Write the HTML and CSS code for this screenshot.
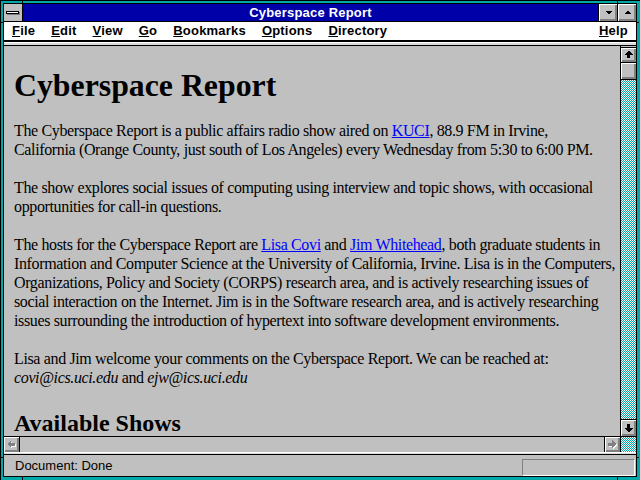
FILE: index.html
```html
<!DOCTYPE html>
<html>
<head>
<meta charset="utf-8">
<title>Cyberspace Report</title>
<link rel="stylesheet" href="styles.css">
</head>
<body>
<div class="window">
  <div class="frame">
    <div class="titlebar">
      <div class="sysmenu"><span class="sysbar"></span></div>
      <div class="title">Cyberspace Report</div>
      <div class="tbtn"><svg width="17" height="17" viewBox="0 0 17 17" shape-rendering="crispEdges"><polygon points="5,7 12,7 8.5,10.5" fill="#000"/></svg></div>
      <div class="tbtn"><svg width="17" height="17" viewBox="0 0 17 17" shape-rendering="crispEdges"><polygon points="5,10 12,10 8.5,6.5" fill="#000"/></svg></div>
    </div>
    <div class="menubar">
      <span class="mi"><u>F</u>ile</span>
      <span class="mi"><u>E</u>dit</span>
      <span class="mi"><u>V</u>iew</span>
      <span class="mi"><u>G</u>o</span>
      <span class="mi"><u>B</u>ookmarks</span>
      <span class="mi"><u>O</u>ptions</span>
      <span class="mi"><u>D</u>irectory</span>
      <span class="mi help"><u>H</u>elp</span>
    </div>
    <div class="sep"></div>
    <div class="main">
      <div class="viewport">
        <div class="page">
          <h1>Cyberspace Report</h1>
          <p>The Cyberspace Report is a public affairs radio show aired on <a href="#">KUCI</a>, 88.9 FM in Irvine,<br>California (Orange County, just south of Los Angeles) every Wednesday from 5:30 to 6:00 PM.</p>
          <p>The show explores social issues of computing using interview and topic shows, with occasional<br>opportunities for call-in questions.</p>
          <p>The hosts for the Cyberspace Report are <a href="#">Lisa Covi</a> and <a href="#">Jim Whitehead</a>, both graduate students in<br>Information and Computer Science at the University of California, Irvine. Lisa is in the Computers,<br>Organizations, Policy and Society (CORPS) research area, and is actively researching issues of<br>social interaction on the Internet. Jim is in the Software research area, and is actively researching<br>issues surrounding the introduction of hypertext into software development environments.</p>
          <p>Lisa and Jim welcome your comments on the Cyberspace Report. We can be reached at:<br><i>covi@ics.uci.edu</i> and <i>ejw@ics.uci.edu</i></p>
          <h2>Available Shows</h2>
        </div>
      </div>
      <div class="vscroll">
        <div class="sbtn up"><svg width="15" height="14" viewBox="0 0 15 14" shape-rendering="crispEdges"><polygon points="7,3 8,3 12,7 9,7 9,10 6,10 6,7 3,7" fill="#000"/></svg></div>
        <div class="thumb"></div>
        <div class="track"><svg class="dither" width="15" height="400" shape-rendering="crispEdges"><defs><pattern id="dv" width="2" height="2" patternUnits="userSpaceOnUse"><rect width="2" height="2" fill="#00a8a8"/><rect x="1" y="0" width="1" height="1" fill="#ffffff"/><rect x="0" y="1" width="1" height="1" fill="#ffffff"/></pattern></defs><rect width="15" height="400" fill="url(#dv)"/></svg></div>
        <div class="sbtn down"><svg width="15" height="16" viewBox="0 0 15 16" shape-rendering="crispEdges"><polygon points="6,4 9,4 9,8 12,8 8,12 7,12 3,8 6,8" fill="#000"/></svg></div>
      </div>
    </div>
    <div class="hrow">
      <div class="hbtn left"><svg width="15" height="15" viewBox="0 0 15 15" shape-rendering="crispEdges"><polygon points="4,8 8,4 8,7 12,7 12,10 8,10 8,12" fill="#fff"/><polygon points="3,7 7,3 7,6 11,6 11,9 7,9 7,11" fill="#808080"/></svg></div>
      <div class="htrack"></div>
      <div class="hbtn right"><svg width="15" height="15" viewBox="0 0 15 15" shape-rendering="crispEdges"><polygon points="12,8 8,4 8,7 4,7 4,10 8,10 8,12" fill="#fff"/><polygon points="11,7 7,3 7,6 3,6 3,9 7,9 7,11" fill="#808080"/></svg></div>
      <div class="corner"><svg class="dither" width="15" height="15" shape-rendering="crispEdges"><rect width="15" height="15" fill="url(#dv)"/></svg></div>
    </div>
    <div class="sep2"></div>
    <div class="status">
      <span class="stext">Document: Done</span>
      <div class="sbox"></div>
    </div>
  </div>
  <span class="notch v t1"></span>
  <span class="notch v t2"></span>
  <span class="notch v b1"></span>
  <span class="notch v b2"></span>
  <span class="notch h l1"></span>
  <span class="notch h l2"></span>
  <span class="notch h r1"></span>
  <span class="notch h r2"></span>
</div>
</body>
</html>
```
FILE: styles.css
```css
html, body {
  margin: 0;
  padding: 0;
}
body {
  width: 640px;
  height: 480px;
  overflow: hidden;
  background: #00a8a8;
  font-family: "Liberation Sans", Arial, sans-serif;
}
.window {
  box-sizing: border-box;
  position: relative;
  width: 640px;
  height: 480px;
  border-top: 1px solid #000;
  border-left: 1px solid #000;
  padding: 2px 3px 3px 2px;
  background: #00a8a8;
}
.frame {
  box-sizing: border-box;
  height: 100%;
  border: 1px solid #000;
  display: flex;
  flex-direction: column;
  background: #c0c0c0;
}
.titlebar {
  flex: none;
  height: 17px;
  border-bottom: 1px solid #000;
  display: flex;
  background: #0000a8;
}
.sysmenu {
  width: 18px;
  border-right: 1px solid #000;
  background: #c0c0c0;
}
.sysbar {
  display: block;
  width: 11px;
  height: 1px;
  margin: 7px 0 0 2px;
  border: 1px solid #000;
  background: #fff;
  box-shadow: 1px 1px 0 #808080;
}
.title {
  flex: 1;
  color: #fff;
  font-weight: bold;
  font-size: 13px;
  letter-spacing: 0.2px;
  line-height: 17px;
  text-align: center;
}
.tbtn {
  width: 18px;
  border-left: 1px solid #000;
  background: #c0c0c0;
  box-shadow: inset 1px 1px #fff, inset -1px -1px #808080, inset -2px -2px #808080;
  display: flex;
  align-items: center;
  justify-content: center;
}
.menubar {
  flex: none;
  height: 18px;
  background: #fff;
  border-bottom: 2px solid #000;
  display: flex;
  font-weight: bold;
  font-size: 13px;
  letter-spacing: 0.2px;
  line-height: 18px;
  color: #000;
}
.mi {
  padding: 0 8px;
}
.mi u {
  text-underline-offset: 1px;
}
.help {
  margin-left: auto;
}
.sep {
  flex: none;
  height: 4px;
  background: linear-gradient(#fff 0 1px, #dcdcdc 1px 3px, #000 3px 4px);
}
.main {
  flex: none;
  height: 390px;
  display: flex;
}
.viewport {
  flex: 1;
  overflow: hidden;
  background: #c0c0c0;
}
.page {
  padding: 21px 0 0 10px;
  font-family: "Liberation Serif", "Times New Roman", serif;
  color: #000;
}
.page h1 {
  margin: 0 0 17px;
  font-size: 31.8px;
  line-height: 37px;
  font-weight: bold;
}
.page p {
  margin: 0 0 19px;
  font-size: 16px;
  line-height: 19px;
  letter-spacing: -0.36px;
  white-space: nowrap;
}
.page a {
  color: #0000ff;
  text-decoration: underline;
}
.page h2 {
  margin: 22px 0 0;
  font-size: 24px;
  line-height: 28px;
  font-weight: bold;
}
.vscroll {
  width: 15px;
  border-left: 1px solid #000;
  display: flex;
  flex-direction: column;
}
.sbtn, .thumb, .hbtn {
  background: #c0c0c0;
  box-shadow: inset 1px 1px #fff, inset -1px -1px #808080, inset -2px -2px #808080;
  display: flex;
  align-items: center;
  justify-content: center;
}
.sbtn.up {
  height: 14px;
  margin-top: 1px;
  border-top: 1px solid #000;
  border-bottom: 1px solid #000;
}
.thumb {
  height: 16px;
  border-bottom: 1px solid #000;
}
.track {
  flex: 1;
  overflow: hidden;
  background: #00a8a8;
}
.dither {
  display: block;
}
.sbtn.down {
  height: 16px;
  border-top: 1px solid #000;
}
.hrow {
  flex: none;
  height: 15px;
  border-top: 1px solid #000;
  display: flex;
}
.hbtn {
  width: 15px;
}
.hbtn.left {
  border-right: 1px solid #000;
}
.hbtn.right {
  border-left: 1px solid #000;
}
.htrack {
  flex: 1;
  background: #c0c0c0;
}
.corner {
  width: 15px;
  overflow: hidden;
  border-left: 1px solid #000;
  background: #00a8a8;
}
.sep2 {
  flex: none;
  height: 3px;
  background: linear-gradient(#fff 0 1px, #dcdcdc 1px 2px, #000 2px 3px);
}
.status {
  flex: 1;
  display: flex;
  align-items: center;
  padding-left: 11px;
  font-size: 13px;
  color: #000;
  background: #c0c0c0;
}
.stext {
  line-height: 16px;
}
.sbox {
  box-sizing: border-box;
  margin-left: auto;
  margin-right: 1px;
  align-self: flex-end;
  width: 113px;
  height: 17px;
  border-top: 1px solid #808080;
  border-left: 1px solid #808080;
  border-bottom: 1px solid #fff;
  border-right: 1px solid #fff;
}
.notch {
  position: absolute;
  background: #000;
}
.notch.v {
  width: 1px;
  height: 3px;
}
.notch.h {
  width: 2px;
  height: 1px;
}
.t1 { left: 21px; top: -1px; }
.t2 { left: 616px; top: -1px; }
.b1 { left: 21px; top: 476px; }
.b2 { left: 616px; top: 476px; }
.l1 { left: 0; top: 21px; }
.l2 { left: 0; top: 456px; }
.r1 { left: 636px; top: 21px; width: 3px; }
.r2 { left: 636px; top: 456px; width: 3px; }
```
